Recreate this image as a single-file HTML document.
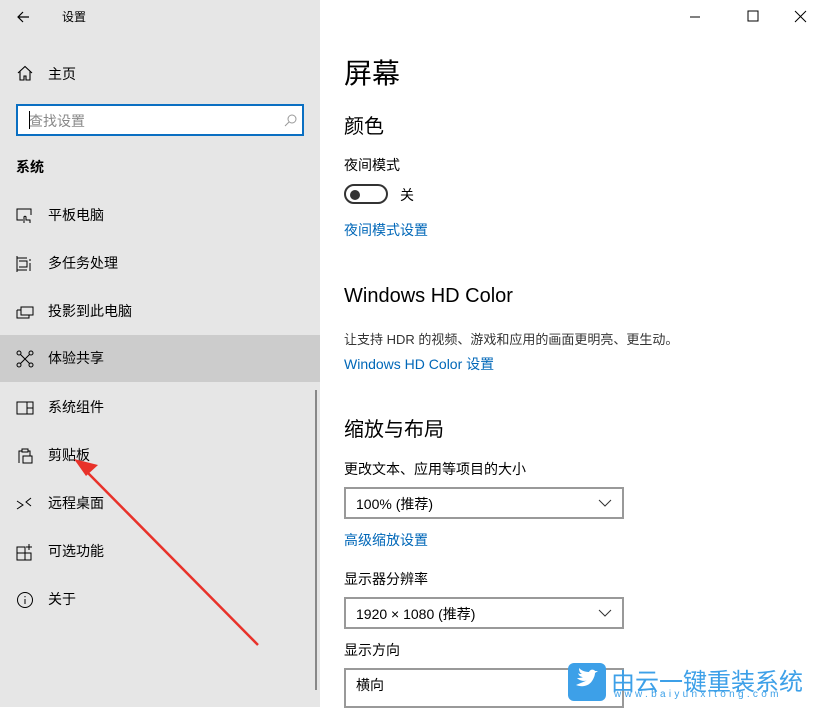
<!DOCTYPE html>
<html><head><meta charset="utf-8"><style>
*{margin:0;padding:0;box-sizing:border-box}
body{width:820px;height:707px;overflow:hidden;background:#fff;font-family:"Liberation Sans","Noto Sans CJK SC",sans-serif;color:#000;position:relative}
.side{position:absolute;left:0;top:0;width:320px;height:707px;background:#e6e6e6}
.t{position:absolute;white-space:nowrap}
.item{position:absolute;left:0;width:320px;height:47px}
.item .ic{position:absolute;left:16px;top:15px;width:18px;height:18px}
.item .l{position:absolute;left:48px;top:13px;font-size:14px}
.link{color:#0067b8;font-size:14px}
.dd{position:absolute;left:344px;width:280px;height:32px;border:2px solid #999;background:#fff}
.dd span{position:absolute;left:10px;top:5px;font-size:14px}
.dd svg{position:absolute;right:10px;top:9px}
</style></head><body>
<div class="side">
<svg class="t" style="left:16px;top:10px" width="14" height="14" viewBox="0 0 14 14"><path d="M13 7H2M7 2L2 7l5 5" stroke="#000" fill="none" stroke-width="1.2"/></svg>
<div class="t" style="left:62px;top:8px;font-size:12px">设置</div>
<svg class="t" style="left:17px;top:65px" width="16" height="16" viewBox="0 0 16 16"><path d="M1 8L8 1.5 15 8M3 6.5V15h4v-4h2v4h4V6.5" stroke="#000" fill="none" stroke-width="1.1"/></svg>
<div class="t" style="left:48px;top:64px;font-size:14px">主页</div>
<div class="t" style="left:16px;top:104px;width:288px;height:32px;border:2px solid #0a6fc2;background:#fff">
<div class="t" style="left:11px;top:5px;font-size:14px;color:#888">查找设置</div>
<div class="t" style="left:11px;top:5px;width:1px;height:18px;background:#000"></div>
<svg class="t" style="left:266px;top:8px" width="13" height="13" viewBox="0 0 13 13"><circle cx="8" cy="5" r="4" stroke="#999" fill="none"/><path d="M5 8L1 12" stroke="#999"/></svg>
</div>
<div class="t" style="left:16px;top:157px;font-size:14px;font-weight:bold">系统</div>
<div class="item" style="top:192px"><svg class="ic" viewBox="0 0 18 18"><path d="M7 13H1V2h14v6M8 16c0-3 0-5 0-6s2-1 2 0v3h4v3" stroke="#000" fill="none"/></svg><span class="l">平板电脑</span></div>
<div class="item" style="top:240px"><svg class="ic" viewBox="0 0 18 18"><path d="M1 1v16M1 3h10M1 15h10M3 6h8v6H3M14 4v2M14 8v8" stroke="#000" fill="none"/></svg><span class="l">多任务处理</span></div>
<div class="item" style="top:288px"><svg class="ic" viewBox="0 0 18 18"><path d="M5 4h12v8H5zM1 7h4M1 7v8h12v-3M4 15v0" stroke="#000" fill="none"/></svg><span class="l">投影到此电脑</span></div>
<div class="item" style="top:335px;background:#cccccc"><svg class="ic" viewBox="0 0 18 18"><circle cx="3" cy="3" r="2" stroke="#000" fill="none"/><circle cx="15" cy="3" r="2" stroke="#000" fill="none"/><circle cx="3" cy="15" r="2" stroke="#000" fill="none"/><circle cx="15" cy="15" r="2" stroke="#000" fill="none"/><path d="M4.5 4.5l9 9M13.5 4.5l-9 9" stroke="#000"/></svg><span class="l">体验共享</span></div>
<div class="item" style="top:384px"><svg class="ic" viewBox="0 0 18 18"><path d="M1 3h16v12H1zM11 3v12M11 9h6" stroke="#000" fill="none"/></svg><span class="l">系统组件</span></div>
<div class="item" style="top:432px"><svg class="ic" viewBox="0 0 18 18"><path d="M3 16V4h3M12 4h2v5M6 2h6v3H6zM7 16V9h9v7z" stroke="#000" fill="none"/></svg><span class="l">剪贴板</span></div>
<div class="item" style="top:480px"><svg class="ic" viewBox="0 0 18 18"><path d="M1 6l6 4-6 4M15 3l-5 4 5 4" stroke="#000" fill="none"/></svg><span class="l">远程桌面</span></div>
<div class="item" style="top:528px"><svg class="ic" viewBox="0 0 18 18"><path d="M1 4h8v13H1zM1 10h14v7H9M13 1v6M10 4h6" stroke="#000" fill="none"/></svg><span class="l">可选功能</span></div>
<div class="item" style="top:576px"><svg class="ic" viewBox="0 0 18 18"><circle cx="9" cy="9" r="7.5" stroke="#000" fill="none"/><path d="M9 8v5M9 5v1.3" stroke="#000"/></svg><span class="l">关于</span></div>
<div class="t" style="left:315px;top:390px;width:2px;height:300px;background:#888"></div>
</div>
<svg class="t" style="left:0;top:0" width="320" height="707"><path d="M258 645L88 473" stroke="#e8322a" stroke-width="2.5"/><path d="M74 459l24 6-12 11z" fill="#e8322a"/></svg>
<svg class="t" style="left:690px;top:10px" width="120" height="14"><path d="M0 7h10M58 1h10v10H58zM105 1l11 11M116 1l-11 11" stroke="#000" fill="none"/></svg>
<div class="t" style="left:344px;top:52px;font-size:28px">屏幕</div>
<div class="t" style="left:344px;top:110px;font-size:20px">颜色</div>
<div class="t" style="left:344px;top:155px;font-size:14px">夜间模式</div>
<div class="t" style="left:344px;top:184px;width:44px;height:20px;border:2px solid #333;border-radius:10px"><div class="t" style="left:4px;top:4px;width:10px;height:10px;border-radius:50%;background:#333"></div></div>
<div class="t" style="left:400px;top:185px;font-size:14px">关</div>
<div class="t link" style="left:344px;top:220px">夜间模式设置</div>
<div class="t" style="left:344px;top:285px;font-size:20px">Windows HD Color</div>
<div class="t" style="left:344px;top:329px;font-size:13px;color:#333">让支持 HDR 的视频、游戏和应用的画面更明亮、更生动。</div>
<div class="t link" style="left:344px;top:354px">Windows HD Color 设置</div>
<div class="t" style="left:344px;top:413px;font-size:20px">缩放与布局</div>
<div class="t" style="left:344px;top:459px;font-size:14px">更改文本、应用等项目的大小</div>
<div class="dd" style="top:487px"><span>100% (推荐)</span><svg width="14" height="10"><path d="M1 2l6 6 6-6" stroke="#333" fill="none"/></svg></div>
<div class="t link" style="left:344px;top:530px">高级缩放设置</div>
<div class="t" style="left:344px;top:569px;font-size:14px">显示器分辨率</div>
<div class="dd" style="top:597px"><span>1920 × 1080 (推荐)</span><svg width="14" height="10"><path d="M1 2l6 6 6-6" stroke="#333" fill="none"/></svg></div>
<div class="t" style="left:344px;top:640px;font-size:14px">显示方向</div>
<div class="dd" style="top:668px;height:40px"><span>横向</span></div>
<div class="t" style="left:568px;top:663px;width:38px;height:38px;background:#3da0e8;border-radius:6px"><svg width="38" height="38"><path d="M8 22c5 2 12 2 16-4 2-3 3-6 3-8l3-2-3 0c-1-2-5-2-6 1-5 0-8-2-10-4 0 3 1 5 3 6-2 0-3 0-4-1 1 3 3 4 5 4-2 1-4 1-6 1 4 4 9 3 11 2" fill="#fff"/></svg></div>
<div class="t" style="left:611px;top:662px;font-size:24px;color:#3da0e8">由云一键重装系统</div>
<div class="t" style="left:614px;top:689px;font-size:10px;color:#3da0e8;letter-spacing:3.3px">www.baiyunxitong.com</div>
</body></html>
